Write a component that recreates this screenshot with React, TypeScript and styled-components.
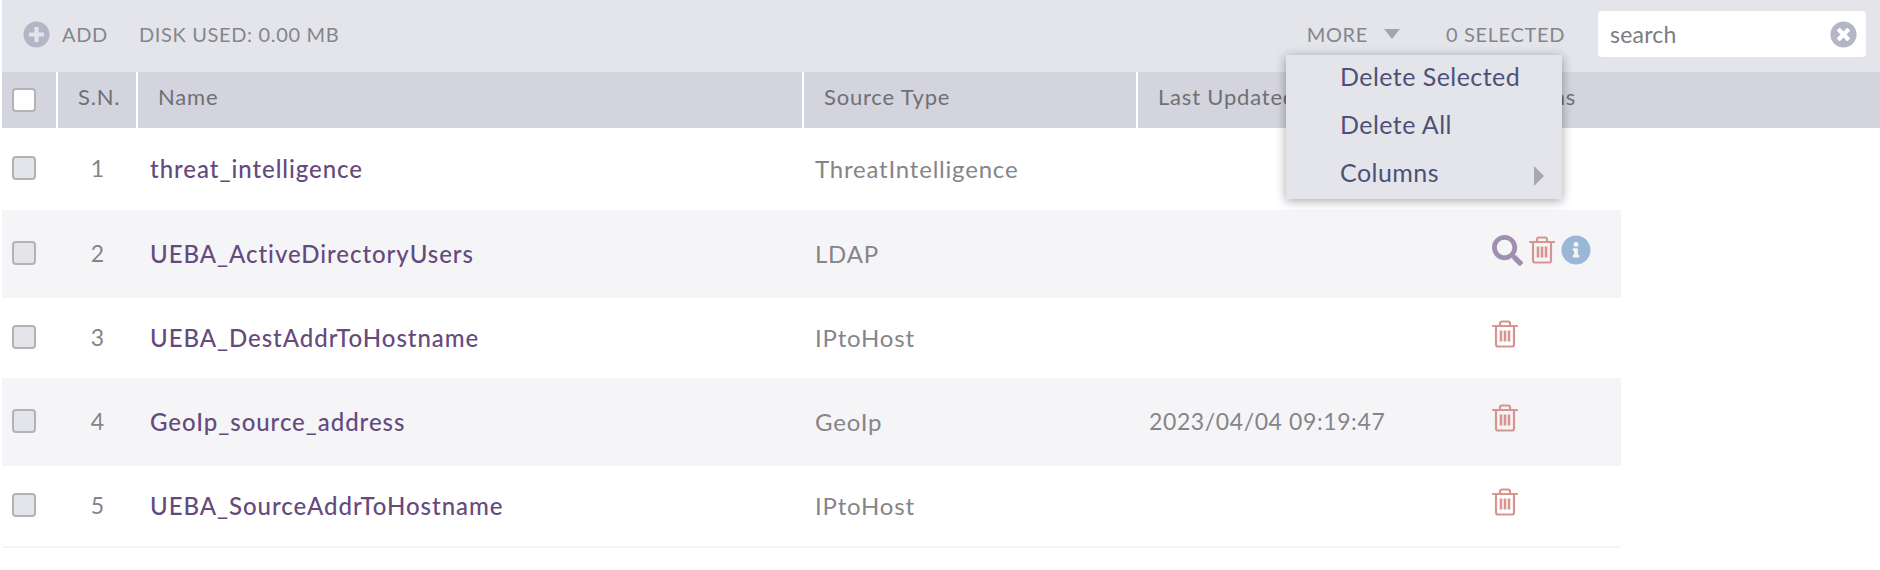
import React from 'react';
import styled, { createGlobalStyle } from 'styled-components';
import { FaSearch, FaInfoCircle, FaPlusCircle, FaTimesCircle } from 'react-icons/fa';

const GlobalStyle = createGlobalStyle`
  html, body {
    margin: 0;
    padding: 0;
    background: #fff;
    font-family: Lato, "Open Sans", sans-serif;
    overflow: hidden;
  }
`;

const Page = styled.div`
  position: relative;
  width: 1880px;
  height: 570px;
  padding-left: 2px;
  box-sizing: border-box;
`;

const Toolbar = styled.div`
  display: flex;
  align-items: center;
  height: 72px;
  padding: 0 14px 4px 21px;
  box-sizing: border-box;
  background: #e4e5eb;
  color: #85858a;
  font-size: 20px;
  letter-spacing: 0.65px;
`;

const AddIcon = styled(FaPlusCircle)`
  width: 27px;
  height: 27px;
  color: #b4b6c5;
  margin-right: 12px;
`;

const DiskUsed = styled.span`
  margin-left: 31px;
`;

const More = styled.div`
  display: flex;
  align-items: center;
  margin-left: auto;
`;

const Caret = styled.span`
  width: 0;
  height: 0;
  margin-left: 16px;
  border-left: 8px solid transparent;
  border-right: 8px solid transparent;
  border-top: 10px solid #a5a5a8;
`;

const SelectedCount = styled.span`
  margin-left: 46px;
`;

const SearchBox = styled.div`
  display: flex;
  align-items: center;
  justify-content: space-between;
  width: 268px;
  height: 46px;
  margin-left: 33px;
  padding: 0 9px 0 12px;
  box-sizing: border-box;
  background: #fff;
  border-radius: 4px;
  font-size: 23px;
  letter-spacing: 0.2px;
  color: #7c7c80;
`;

const ClearIcon = styled(FaTimesCircle)`
  width: 27px;
  height: 27px;
  color: #b4b6c5;
`;

const HeaderRow = styled.div`
  display: flex;
  height: 56px;
  background: #d3d4dd;
  color: #707074;
  font-size: 22px;
  letter-spacing: 0.8px;
`;

const HeaderCell = styled.div<{ $w: number; $pad: number }>`
  display: flex;
  align-items: center;
  width: ${(p) => p.$w}px;
  padding: 0 0 8px ${(p) => p.$pad}px;
  box-sizing: border-box;
  border-right: 2px solid #fff;
  &:last-child {
    border-right: none;
  }
`;

const Body = styled.div`
  width: 1619px;
`;

const Row = styled.div<{ $even: boolean }>`
  display: flex;
  align-items: center;
  height: ${(p) => (p.$even ? 88 : 80)}px;
  padding-bottom: 2px;
  box-sizing: border-box;
  background: ${(p) => (p.$even ? '#f5f5f8' : '#fff')};
  &:first-child {
    height: 82px;
  }
  &:last-child {
    height: 82px;
    border-bottom: 2px solid #f5f5f8;
  }
`;

const CheckCell = styled.div`
  display: flex;
  align-items: center;
  width: 54px;
  padding-left: 10px;
  box-sizing: border-box;
`;

const Checkbox = styled.span<{ $white?: boolean }>`
  display: block;
  width: 24px;
  height: 24px;
  box-sizing: border-box;
  border: 2px solid #b3b3b6;
  border-radius: 4px;
  background: ${(p) => (p.$white ? '#fff' : '#e4e5eb')};
`;

const HeaderCheckbox = styled(Checkbox)`
  margin-top: 8px;
`;

const IndexCell = styled.div`
  width: 83px;
  text-align: center;
  color: #858589;
  font-size: 23px;
`;

const NameCell = styled.div`
  width: 664px;
  padding-left: 11px;
  box-sizing: border-box;
  color: #654a7d;
  font-size: 24px;
  font-weight: 500;
  letter-spacing: 0.95px;
`;

const TypeCell = styled.div`
  width: 325px;
  padding-left: 12px;
  box-sizing: border-box;
  color: #858589;
  font-size: 24px;
  letter-spacing: 0.8px;
`;

const UpdatedCell = styled.div`
  width: 364px;
  padding-left: 21px;
  box-sizing: border-box;
  color: #858589;
  font-size: 23px;
  letter-spacing: 0.6px;
`;

const ActionsCell = styled.div`
  display: flex;
  align-items: center;
  gap: 6px;
  margin-top: -6px;
`;

const SearchAction = styled(FaSearch)`
  width: 31px;
  height: 31px;
  color: #a28fb0;
`;

const InfoAction = styled(FaInfoCircle)`
  width: 30px;
  height: 30px;
  color: #9ab7d6;
`;

const TrashSvg = styled.svg`
  display: block;
  width: 26px;
  height: 28px;
  fill: none;
  stroke: #d8958f;
  stroke-width: 2.2;
`;

const Menu = styled.div`
  position: absolute;
  left: 1286px;
  top: 55px;
  width: 276px;
  height: 144px;
  padding: 0 18px 0 54px;
  box-sizing: border-box;
  background: #e4e5eb;
  box-shadow: 0 2px 10px rgba(0, 0, 0, 0.35);
  color: #4e5078;
  font-size: 25px;
  letter-spacing: 0.45px;
`;

const MenuItem = styled.div`
  display: flex;
  align-items: center;
  justify-content: space-between;
  height: 48px;
  padding-bottom: 6px;
  box-sizing: border-box;
`;

const SubArrow = styled.span`
  width: 0;
  height: 0;
  margin-top: 8px;
  border-top: 10px solid transparent;
  border-bottom: 10px solid transparent;
  border-left: 10px solid #a8a8aa;
`;

function TrashIcon() {
  return (
    <TrashSvg viewBox="0 0 26 28">
      <path d="M1 6h24" strokeLinecap="round" />
      <path d="M8 6V3.5Q8 1.5 10 1.5h6Q18 1.5 18 3.5V6" />
      <path d="M4 6v18.5Q4 26.5 6 26.5h14q2 0 2-2V6" />
      <path d="M9 10.5v11M13 10.5v11M17 10.5v11" strokeWidth="2.6" />
    </TrashSvg>
  );
}

type Source = {
  name: string;
  type: string;
  updated?: string;
  full?: boolean;
  deletable?: boolean;
};

const sources: Source[] = [
  { name: 'threat_intelligence', type: 'ThreatIntelligence' },
  { name: 'UEBA_ActiveDirectoryUsers', type: 'LDAP', full: true },
  { name: 'UEBA_DestAddrToHostname', type: 'IPtoHost', deletable: true },
  { name: 'GeoIp_source_address', type: 'GeoIp', updated: '2023/04/04 09:19:47', deletable: true },
  { name: 'UEBA_SourceAddrToHostname', type: 'IPtoHost', deletable: true },
];

export default function App() {
  return (
    <>
      <GlobalStyle />
      <Page>
        <Toolbar>
          <AddIcon />
          <span>ADD</span>
          <DiskUsed>DISK USED: 0.00 MB</DiskUsed>
          <More>
            MORE
            <Caret />
          </More>
          <SelectedCount>0 SELECTED</SelectedCount>
          <SearchBox>
            search
            <ClearIcon />
          </SearchBox>
        </Toolbar>
        <HeaderRow>
          <HeaderCell $w={56} $pad={10}>
            <HeaderCheckbox $white />
          </HeaderCell>
          <HeaderCell $w={80} $pad={20}>S.N.</HeaderCell>
          <HeaderCell $w={666} $pad={20}>Name</HeaderCell>
          <HeaderCell $w={334} $pad={20}>Source Type</HeaderCell>
          <HeaderCell $w={340} $pad={20}>Last Updated</HeaderCell>
          <HeaderCell $w={200} $pad={20}>Actions</HeaderCell>
        </HeaderRow>
        <Body>
          {sources.map((s, i) => (
            <Row key={s.name} $even={i % 2 === 1}>
              <CheckCell>
                <Checkbox />
              </CheckCell>
              <IndexCell>{i + 1}</IndexCell>
              <NameCell>{s.name}</NameCell>
              <TypeCell>{s.type}</TypeCell>
              <UpdatedCell>{s.updated}</UpdatedCell>
              <ActionsCell>
                {s.full && <SearchAction />}
                {(s.full || s.deletable) && <TrashIcon />}
                {s.full && <InfoAction />}
              </ActionsCell>
            </Row>
          ))}
        </Body>
        <Menu>
          <MenuItem>Delete Selected</MenuItem>
          <MenuItem>Delete All</MenuItem>
          <MenuItem>
            Columns
            <SubArrow />
          </MenuItem>
        </Menu>
      </Page>
    </>
  );
}
